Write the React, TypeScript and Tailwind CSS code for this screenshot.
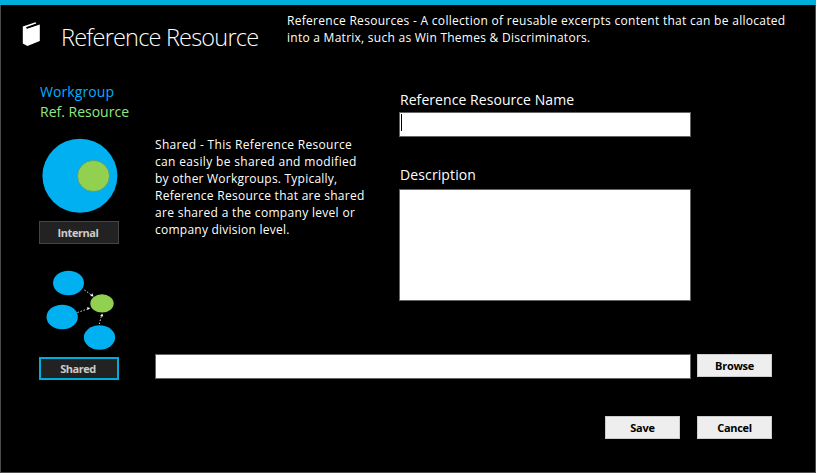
import React from "react";

function Line({ children, className }: { children: React.ReactNode; className?: string }) {
  return (
    <div className="h-[17px]">
      <span className={`whitespace-nowrap ${className ?? "tracking-[0.29px]"}`}>{children}</span>
    </div>
  );
}

function BookIcon() {
  return (
    <svg className="mt-[17px] ml-[21px] h-6 w-[19px] shrink-0" viewBox="22 22 19 24" fill="#fff">
      <path d="M22.8 26.6 L35.5 22.2 L36.3 23.4 L26 27.2 L27 28.8 L39.8 24.4 V41 L27.4 46 L22.8 43.6 Z" />
      <path d="M26.6 28 L36.6 24.5" stroke="#000" strokeWidth="1.3" />
    </svg>
  );
}

function InternalDiagram() {
  return (
    <svg className="ml-[2px] h-[76px] w-[78px]" viewBox="41 138 78 76">
      <ellipse cx="79.9" cy="175.8" rx="37.5" ry="37" fill="#00b0f0" />
      <ellipse cx="93.5" cy="176" rx="16" ry="15.6" fill="#92d050" stroke="#4f9a78" strokeWidth="0.8" />
    </svg>
  );
}

function SharedDiagram() {
  return (
    <svg className="ml-[6px] h-[82px] w-[72px]" viewBox="45 269 72 82">
      <g fill="#00b0f0">
        <ellipse cx="68.5" cy="283" rx="15.5" ry="12.2" />
        <ellipse cx="62.2" cy="317" rx="15.7" ry="12.2" />
        <ellipse cx="99.5" cy="337.5" rx="15.6" ry="12.2" />
      </g>
      <ellipse cx="102" cy="303.4" rx="11.7" ry="9.2" fill="#92d050" />
      <g stroke="#fff" strokeWidth="0.9" strokeDasharray="1.4 1.8">
        <path d="M84.5 290 L92 295.5" />
        <path d="M77.5 312.5 L89 308.5" />
        <path d="M99.3 324 L101.7 315" />
      </g>
      <g fill="#fff">
        <path d="M93.5 296.5 L90.3 296 L92.3 293.2 Z" />
        <path d="M90.3 308 L87.7 310 L87 307.2 Z" />
        <path d="M102.2 313.5 L103.3 316.5 L100.2 316 Z" />
      </g>
    </svg>
  );
}

const lightButton =
  "h-[23px] w-[75px] border border-[#cccccc] bg-[#eeeeee] text-[11px] leading-[21px] font-bold tracking-[-0.3px] text-black";
const field = "block border border-[#646464] bg-white outline-none resize-none";

export default function App() {
  return (
    <div className="flex h-[473px] w-[816px] flex-col border-x border-b border-[#4a4a4a] bg-black font-['Open_Sans','Noto_Sans',sans-serif] text-white">
      <div className="-mx-px h-[5px] shrink-0 bg-[#00aedb]" />
      <header className="flex h-[77px] shrink-0">
        <BookIcon />
        <h1 className="mt-[15px] ml-[20px] w-[226px] shrink-0 text-[23.5px] leading-[34px] font-light whitespace-nowrap">
          <span className="tracking-[-0.8px]">Reference Resource</span>
        </h1>
        <div className="mt-[7px] text-[12px] leading-[17px]">
          <Line>Reference Resources - A collection of reusable excerpts content that can be allocated</Line>
          <Line className="tracking-[0.26px]">into a Matrix, such as Win Themes &amp; Discriminators.</Line>
        </div>
      </header>
      <main className="flex">
        <aside className="ml-[38px] w-20 shrink-0">
          <div className="ml-px text-[14px] leading-5 whitespace-nowrap">
            <div className="text-[#00aeff]"><span className="tracking-[0.1px]">Workgroup</span></div>
            <div className="text-[#92e880]"><span>Ref. Resource</span></div>
          </div>
          <div className="mt-4"><InternalDiagram /></div>
          <button className="mt-[7px] block h-[23px] w-20 border border-[#444444] bg-[#222222] pr-[2px] text-[11px] leading-[21px] font-bold text-[#cccccc]">
            <span className="tracking-[-0.45px]">Internal</span>
          </button>
          <div className="mt-[25px] h-[82px]"><SharedDiagram /></div>
          <button className="mt-[6px] block h-[23px] w-20 border-2 border-[#00aedb] bg-[#222222] pr-[2px] text-[11px] leading-[19px] font-bold text-[#cccccc]">
            <span className="tracking-[-0.45px]">Shared</span>
          </button>
        </aside>
        <section className="ml-9 w-[617px]">
          <div className="flex h-[272px]">
            <div className="mt-[54px] w-[244px] text-[12px] leading-[17px]">
              <Line className="tracking-[0.32px]">Shared - This Reference Resource</Line>
              <Line className="tracking-[0.34px]">can easily be shared and modified</Line>
              <Line className="tracking-[0.22px]">by other Workgroups. Typically,</Line>
              <Line className="tracking-[0.27px]">Reference Resource that are shared</Line>
              <Line className="tracking-[0.31px]">are shared a the company level or</Line>
              <Line className="tracking-[0.24px]">company division level.</Line>
            </div>
            <div className="w-[292px]">
              <label className="mt-2 block h-[22px] pl-px text-[14px] leading-5"><span className="tracking-[0.06px]">Reference Resource Name</span></label>
              <div className={`${field} h-[25px] w-[292px] pt-px pl-px`}>
                <div className="h-[17px] w-px bg-black" />
              </div>
              <label className="mt-[28px] block h-6 pl-px text-[14px] leading-5"><span className="tracking-[0.12px]">Description</span></label>
              <textarea className={`${field} h-[112px] w-[292px]`} />
            </div>
          </div>
          <div className="flex gap-[6px]">
            <input className={`${field} h-[25px] w-[536px]`} />
            <button className={lightButton}><span>Browse</span></button>
          </div>
          <div className="mt-[37px] flex justify-end gap-[17px]">
            <button className={lightButton}><span>Save</span></button>
            <button className={lightButton}><span>Cancel</span></button>
          </div>
        </section>
      </main>
    </div>
  );
}
